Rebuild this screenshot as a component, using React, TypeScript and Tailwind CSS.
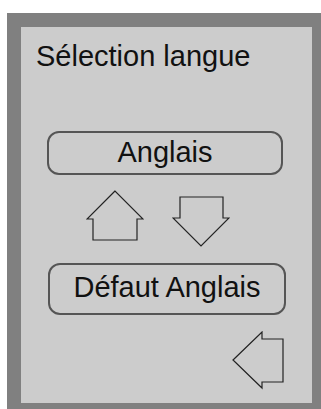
export default function App() {
  return (
    <div className="w-[321px] h-[409px] overflow-hidden bg-white pl-[7px] pt-[13px]" style={{ fontFamily: '"Liberation Sans", Arial, sans-serif' }}>
      <div className="w-[319px] h-[404px] border-[14px] border-[#808080] bg-[#cccccc] flex flex-col">
        {/* Title */}
        <h1 className="ml-[15px] mt-[13px] text-[29px] leading-[32px] text-[#111]">Sélection langue</h1>

        {/* Current language */}
        <div className="ml-[26px] mt-[59px] w-[236px] h-[44px] rounded-[12px] border-2 border-[#555] pt-[3px] text-center text-[29px] leading-[32px] text-[#111]">
          Anglais
        </div>

        {/* Up / down arrows */}
        <div className="flex items-start gap-[28px] pl-[65px] mt-[15px]">
          <svg width="58" height="51" viewBox="0 0 58 51">
            <polygon points="29,1 1,29 7,29 7,50 51,50 51,29 57,29" fill="none" stroke="#222" strokeWidth="1.2" strokeLinejoin="miter" />
          </svg>
          <svg width="58" height="51" viewBox="0 0 58 51" className="mt-[6px]">
            <polygon points="8,1 51,1 51,22 57,22 29,50 1,22 8,22" fill="none" stroke="#222" strokeWidth="1.2" strokeLinejoin="miter" />
          </svg>
        </div>

        {/* Default language */}
        <div className="ml-[27px] mt-[16px] w-[238px] h-[52px] rounded-[12px] border-2 border-[#555] pt-[6px] text-center text-[29px] leading-[32px] text-[#111]">
          Défaut Anglais
        </div>

        {/* Back arrow */}
        <div className="flex justify-end pr-[27px] mt-[16px]">
          <svg width="53" height="59" viewBox="0 0 53 59">
            <polygon points="1,29 30,1 30,8 51,8 51,51 30,51 30,57" fill="none" stroke="#222" strokeWidth="1.2" strokeLinejoin="miter" />
          </svg>
        </div>
      </div>
    </div>
  )
}
